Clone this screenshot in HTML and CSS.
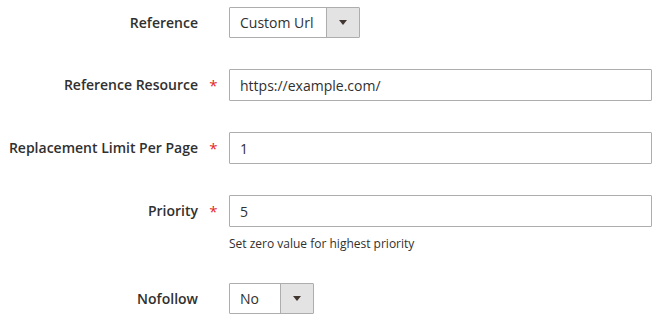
FILE: index.html
```html
<!DOCTYPE html>
<html>
<head>
  <meta charset="utf-8">
  <title>Link settings</title>
  <link rel="stylesheet" href="styles.css">
</head>
<body>
  <form class="form">
    <div class="field">
      <label class="label">Reference</label>
      <span class="star"></span>
      <div class="control">
        <div class="select select-wide">
          <span class="select-value">Custom Url</span>
          <span class="select-btn"><span class="arrow"></span></span>
        </div>
      </div>
    </div>

    <div class="field">
      <label class="label">Reference Resource</label>
      <span class="star">*</span>
      <div class="control">
        <input class="input" type="text" value="https://example.com/">
      </div>
    </div>

    <div class="field">
      <label class="label">Replacement Limit Per Page</label>
      <span class="star">*</span>
      <div class="control">
        <input class="input" type="text" value="1">
      </div>
    </div>

    <div class="field">
      <label class="label">Priority</label>
      <span class="star">*</span>
      <div class="control">
        <input class="input" type="text" value="5">
        <div class="note">Set zero value for highest priority</div>
      </div>
    </div>

    <div class="field">
      <label class="label">Nofollow</label>
      <span class="star"></span>
      <div class="control">
        <div class="select select-small">
          <span class="select-value">No</span>
          <span class="select-btn"><span class="arrow"></span></span>
        </div>
      </div>
    </div>
  </form>
</body>
</html>
```

FILE: styles.css
```css
body {
  margin: 0;
  font-family: "Open Sans", "DejaVu Sans", sans-serif;
  color: #303030;
  background: #fff;
}

.form {
  padding-top: 7px;
  width: 652px;
}

/* label | star | control */
.field {
  display: grid;
  grid-template-columns: 198px 31px 1fr;
  align-items: start;
  margin-bottom: 31px;
}

.field:last-child {
  margin-bottom: 0;
}

.label {
  text-align: right;
  font-size: 14px;
  font-weight: 600;
  line-height: 31px;
  white-space: nowrap;
}

.star {
  text-align: center;
  color: #e22626;
  font-size: 15px;
  line-height: 32px;
}

.input {
  display: block;
  box-sizing: border-box;
  width: 100%;
  height: 32px;
  margin: 0;
  padding: 0 10px;
  border: 1px solid #adadad;
  border-radius: 1px;
  font-family: inherit;
  font-size: 14px;
  color: #303030;
  background: #fff;
}

.note {
  margin-top: 8px;
  font-size: 12px;
  line-height: 17px;
}

.select {
  display: flex;
  box-sizing: border-box;
  height: 31px;
  border: 1px solid #adadad;
  border-radius: 1px;
  font-size: 14px;
}

.select-wide {
  width: 131px;
}

.select-small {
  width: 85px;
}

.select-value {
  flex: 1;
  padding-left: 10px;
  line-height: 29px;
}

.select-btn {
  width: 32px;
  border-left: 1px solid #adadad;
  background: #e3e3e3;
  display: flex;
  align-items: center;
  justify-content: center;
}

.arrow {
  width: 0;
  height: 0;
  border-left: 4px solid transparent;
  border-right: 4px solid transparent;
  border-top: 5px solid #41362f;
}
```
